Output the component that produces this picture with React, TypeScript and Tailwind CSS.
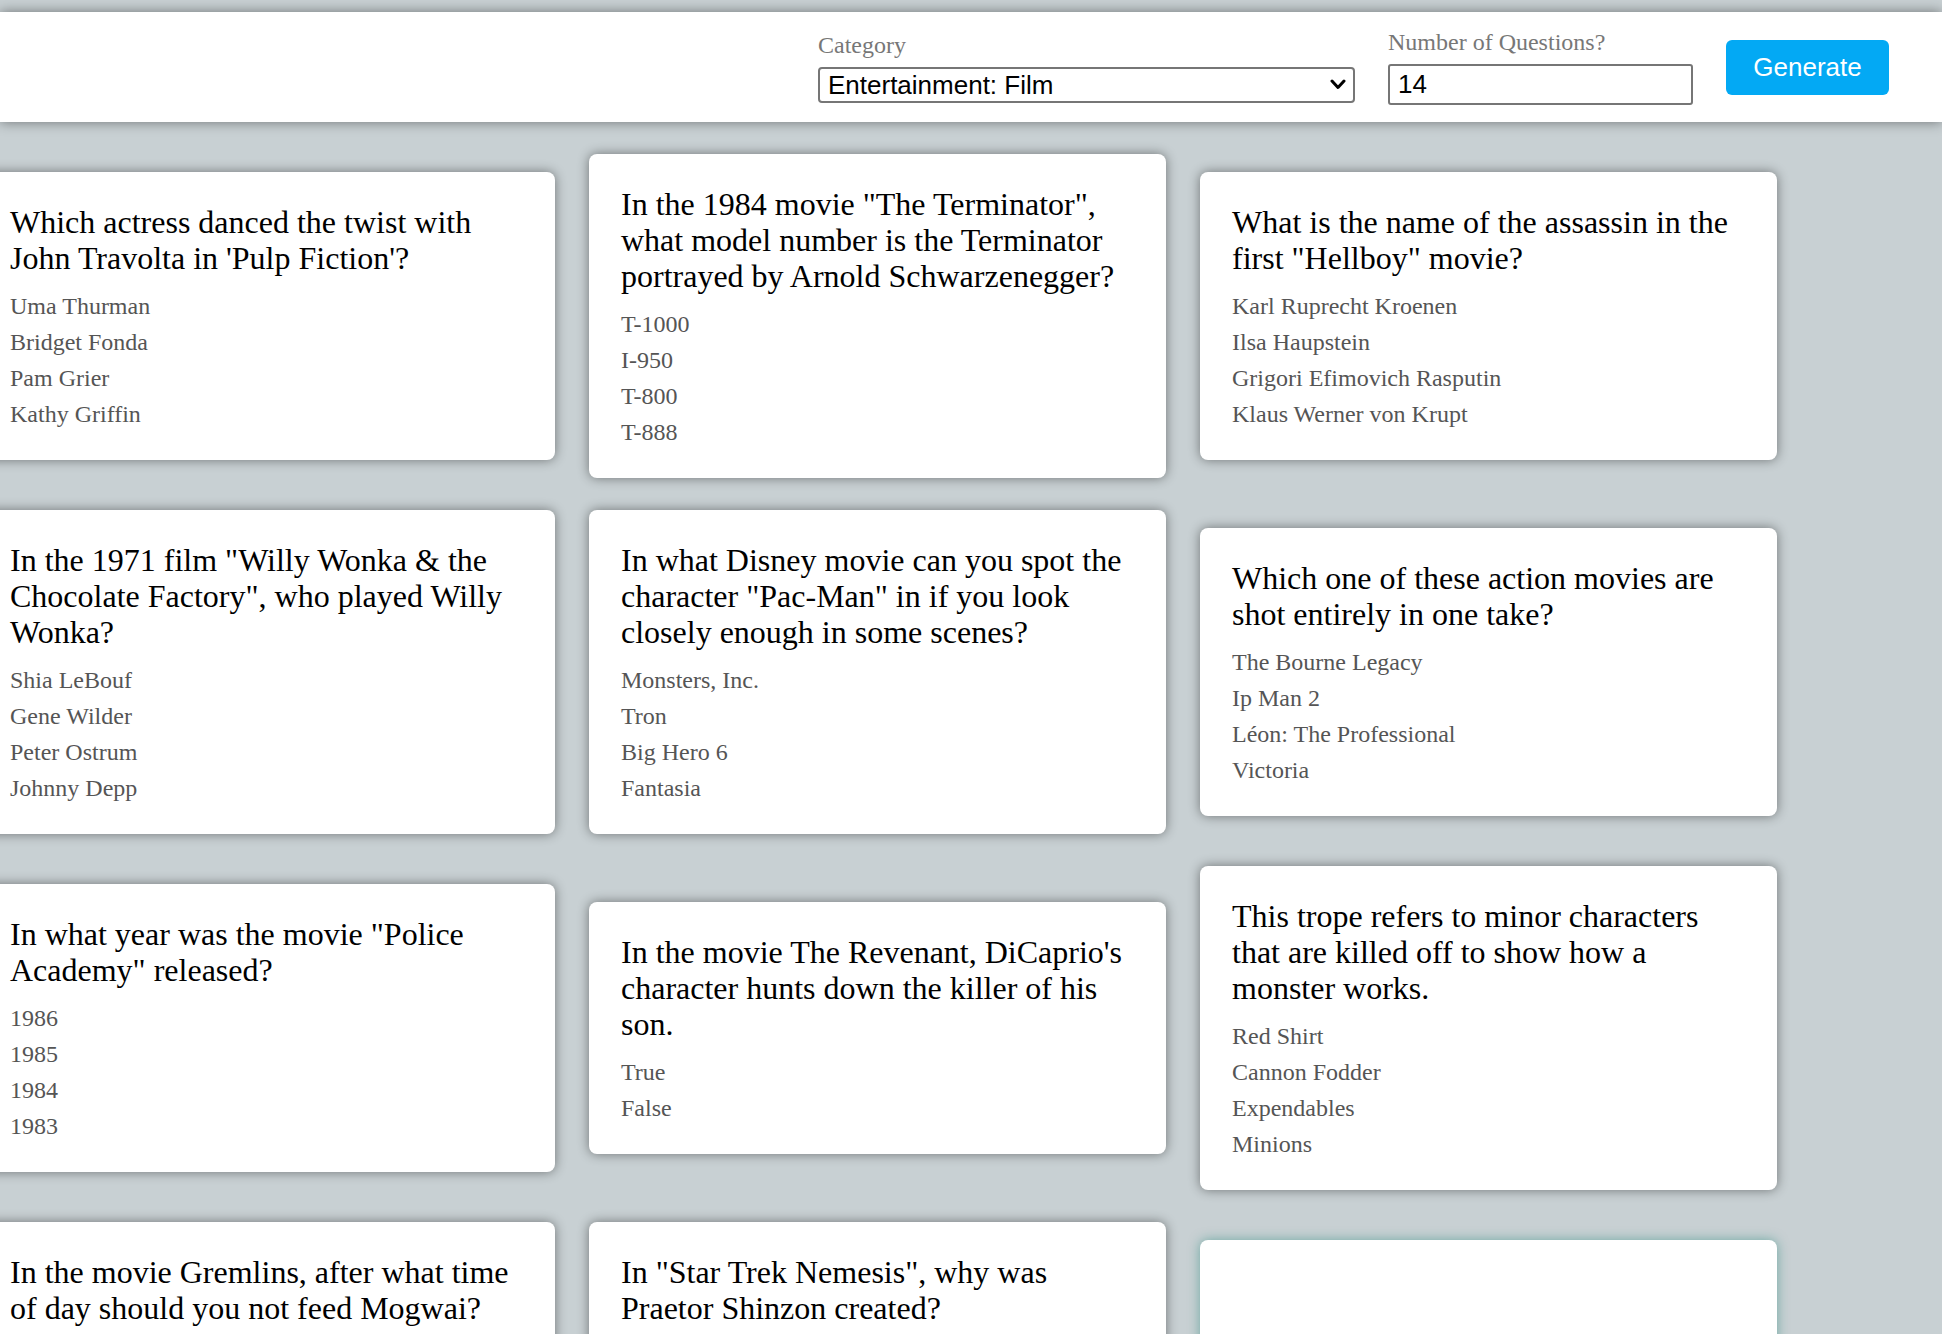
const questions: { q: string; a: string[]; blank?: boolean }[] = [
  {
    q: "Which actress danced the twist with John Travolta in 'Pulp Fiction'?",
    a: ['Uma Thurman', 'Bridget Fonda', 'Pam Grier', 'Kathy Griffin'],
  },
  {
    q: 'In the 1984 movie "The Terminator", what model number is the Terminator portrayed by Arnold Schwarzenegger?',
    a: ['T-1000', 'I-950', 'T-800', 'T-888'],
  },
  {
    q: 'What is the name of the assassin in the first "Hellboy" movie?',
    a: ['Karl Ruprecht Kroenen', 'Ilsa Haupstein', 'Grigori Efimovich Rasputin', 'Klaus Werner von Krupt'],
  },
  {
    q: 'In the 1971 film "Willy Wonka & the Chocolate Factory", who played Willy Wonka?',
    a: ['Shia LeBouf', 'Gene Wilder', 'Peter Ostrum', 'Johnny Depp'],
  },
  {
    q: 'In what Disney movie can you spot the character "Pac-Man" in if you look closely enough in some scenes?',
    a: ['Monsters, Inc.', 'Tron', 'Big Hero 6', 'Fantasia'],
  },
  {
    q: 'Which one of these action movies are shot entirely in one take?',
    a: ['The Bourne Legacy', 'Ip Man 2', 'Léon: The Professional', 'Victoria'],
  },
  {
    q: 'In what year was the movie "Police Academy" released?',
    a: ['1986', '1985', '1984', '1983'],
  },
  {
    q: "In the movie The Revenant, DiCaprio's character hunts down the killer of his son.",
    a: ['True', 'False'],
  },
  {
    q: 'This trope refers to minor characters that are killed off to show how a monster works.',
    a: ['Red Shirt', 'Cannon Fodder', 'Expendables', 'Minions'],
  },
  {
    q: 'In the movie Gremlins, after what time of day should you not feed Mogwai?',
    a: ['Midnight', 'Evening', 'Morning', 'Afternoon'],
  },
  {
    q: 'In "Star Trek Nemesis", why was Praetor Shinzon created?',
    a: ['To replace Picard', 'To destroy the Federation', 'To lead the Remans', 'By accident'],
  },
  // hovered card — content is hidden while it is flipped
  { q: '', a: [], blank: true },
  {
    q: 'Who directed the 1994 film "Pulp Fiction"?',
    a: ['Quentin Tarantino', 'Martin Scorsese', 'Guy Ritchie', 'Robert Rodriguez'],
  },
  {
    q: 'Which movie won the Academy Award for Best Picture in 1998?',
    a: ['Titanic', 'Good Will Hunting', 'As Good as It Gets', 'L.A. Confidential'],
  },
];

function Card({ q, a, blank }: { q: string; a: string[]; blank?: boolean }) {
  if (blank) {
    return (
      <div className="h-[252px] rounded-lg bg-white shadow-[0_0_12px_rgba(20,130,115,0.5)]" />
    );
  }
  return (
    <div className="rounded-lg bg-white px-8 pt-8 pb-7 shadow-[0_0_12px_rgba(0,0,0,0.45)] font-['Liberation_Serif',serif]">
      <h2 className="text-[32px] leading-[36px] text-black">{q}</h2>
      <div className="mt-3">
        {a.map(ans => (
          <div key={ans} className="text-[24px] leading-[36px] text-[#555]">
            {ans}
          </div>
        ))}
      </div>
    </div>
  );
}

export default function App() {
  return (
    <div className="min-h-screen overflow-hidden bg-[#c8d0d3] pt-3">
      <header className="relative z-10 flex h-[110px] items-center justify-end gap-[33px] bg-white pr-[53px] shadow-[0_0_12px_rgba(0,0,0,0.45)]">
        <div className="flex flex-col gap-2">
          <label className="font-['Liberation_Serif',serif] text-[24px] leading-[27px] text-[#777]">
            Category
          </label>
          <div className="relative">
            <select
              defaultValue="film"
              className="h-9 w-[537px] appearance-none rounded-[4px] border-2 border-[#767676] bg-white pl-2 font-['Liberation_Sans',Arial,sans-serif] text-[26px] leading-none text-black outline-none"
            >
              <option value="film">Entertainment: Film</option>
              <option value="music">Entertainment: Music</option>
              <option value="books">Entertainment: Books</option>
            </select>
            <svg
              className="pointer-events-none absolute right-[9px] top-[12px]"
              width="16"
              height="11"
              viewBox="0 0 16 11"
            >
              <path d="M2 2 L8 8.5 L14 2" fill="none" stroke="#000" strokeWidth="3" strokeLinecap="round" strokeLinejoin="round" />
            </svg>
          </div>
        </div>
        <div className="flex flex-col gap-2">
          <label className="font-['Liberation_Serif',serif] text-[24px] leading-[27px] text-[#777]">
            Number of Questions?
          </label>
          <input
            type="number"
            defaultValue={14}
            className="h-[41px] w-[305px] rounded-[3px] border-2 border-[#767676] bg-white pl-2 font-['Liberation_Sans',Arial,sans-serif] text-[26px] text-black outline-none [appearance:textfield]"
          />
        </div>
        <button className="h-[55px] w-[163px] rounded-md bg-[#03a9f4] font-['Liberation_Sans',Arial,sans-serif] text-[26px] text-white">
          Generate
        </button>
      </header>

      <main className="pt-8 pb-10">
        <div className="ml-[-22px] grid grid-cols-[577px_577px_577px] items-center gap-x-[34px] gap-y-8">
          {questions.map((item, i) => (
            <Card key={i} q={item.q} a={item.a} blank={item.blank} />
          ))}
        </div>
      </main>
    </div>
  );
}
